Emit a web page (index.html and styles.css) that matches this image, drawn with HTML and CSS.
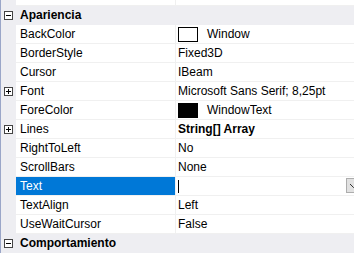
FILE: index.html
```html
<!DOCTYPE html>
<html>
  <head>
    <title>Properties</title>
    <meta charset="UTF-8">
    <link rel="stylesheet" href="styles.css">
  </head>
  <body>
    <div class="grid">
      <div class="row first">
        <div class="gutter"></div>
        <div class="name">AccessibleRole</div>
        <div class="value">Default</div>
      </div>
      <div class="category">
        <div class="gutter"><svg width="9" height="9" viewBox="0 0 9 9"><rect x="0.5" y="0.5" width="8" height="8" fill="#fff" stroke="#444"/><path d="M2 4.5 H7" stroke="#000"/></svg></div>
        <div class="cat-name">Apariencia</div>
      </div>
      <div class="row">
        <div class="gutter"></div>
        <div class="name">BackColor</div>
        <div class="value"><span class="swatch"></span>Window</div>
      </div>
      <div class="row">
        <div class="gutter"></div>
        <div class="name">BorderStyle</div>
        <div class="value">Fixed3D</div>
      </div>
      <div class="row">
        <div class="gutter"></div>
        <div class="name">Cursor</div>
        <div class="value">IBeam</div>
      </div>
      <div class="row">
        <div class="gutter"><svg width="9" height="9" viewBox="0 0 9 9"><rect x="0.5" y="0.5" width="8" height="8" fill="#fff" stroke="#444"/><path d="M2 4.5 H7 M4.5 2 V7" stroke="#000"/></svg></div>
        <div class="name">Font</div>
        <div class="value">Microsoft Sans Serif; 8,25pt</div>
      </div>
      <div class="row">
        <div class="gutter"></div>
        <div class="name">ForeColor</div>
        <div class="value"><span class="swatch dark"></span>WindowText</div>
      </div>
      <div class="row">
        <div class="gutter"><svg width="9" height="9" viewBox="0 0 9 9"><rect x="0.5" y="0.5" width="8" height="8" fill="#fff" stroke="#444"/><path d="M2 4.5 H7 M4.5 2 V7" stroke="#000"/></svg></div>
        <div class="name">Lines</div>
        <div class="value bold">String[] Array</div>
      </div>
      <div class="row">
        <div class="gutter"></div>
        <div class="name">RightToLeft</div>
        <div class="value">No</div>
      </div>
      <div class="row">
        <div class="gutter"></div>
        <div class="name">ScrollBars</div>
        <div class="value">None</div>
      </div>
      <div class="row selected">
        <div class="gutter"></div>
        <div class="name">Text</div>
        <div class="value"><span class="caret"></span><span class="drop"><svg width="9" height="6" viewBox="0 0 9 6"><path d="M1 1 L4.5 4.5 L8 1" fill="none" stroke="#333" stroke-width="1"/></svg></span></div>
      </div>
      <div class="row">
        <div class="gutter"></div>
        <div class="name">TextAlign</div>
        <div class="value">Left</div>
      </div>
      <div class="row">
        <div class="gutter"></div>
        <div class="name">UseWaitCursor</div>
        <div class="value">False</div>
      </div>
      <div class="category">
        <div class="gutter"><svg width="9" height="9" viewBox="0 0 9 9"><rect x="0.5" y="0.5" width="8" height="8" fill="#fff" stroke="#444"/><path d="M2 4.5 H7" stroke="#000"/></svg></div>
        <div class="cat-name">Comportamiento</div>
      </div>
    </div>
  </body>
</html>
```

FILE: styles.css
```css
body {
  margin: 0;
  padding: 0;
  overflow: hidden;
  background: #fff;
  font-family: "Liberation Sans", Arial, sans-serif;
  font-size: 12px;
  color: #000;
}
.grid {
  border-left: 1px solid #9aa6c8;
}
.row, .category {
  display: flex;
  height: 19px;
}
.row.first {
  margin-top: -13px;
}
.gutter {
  width: 15px;
  flex: none;
  background: #eeeef2;
  display: flex;
  align-items: center;
  justify-content: center;
}
.name {
  width: 155px;
  flex: none;
  padding-left: 4px;
  border-right: 1px solid #f0f0f0;
  border-bottom: 1px solid #f0f0f0;
  line-height: 18px;
  white-space: nowrap;
}
.value {
  flex: 1;
  padding-left: 2px;
  border-bottom: 1px solid #f0f0f0;
  line-height: 18px;
  display: flex;
  align-items: center;
  white-space: nowrap;
  position: relative;
}
.value.bold {
  font-weight: bold;
}
.category {
  background: #eeeef2;
}
.cat-name {
  padding-left: 4px;
  font-weight: bold;
  line-height: 19px;
}
.swatch {
  width: 18px;
  height: 13px;
  border: 1px solid #000;
  background: #fff;
  margin-right: 9px;
}
.swatch.dark {
  background: #000;
}
.selected .name {
  background: #0078d7;
  color: #fff;
}
.caret {
  width: 1px;
  height: 13px;
  background: #000;
}
.drop {
  position: absolute;
  right: -8px;
  top: 1px;
  width: 16px;
  height: 15px;
  background: #e1e1e1;
  border: 1px solid #adadad;
  box-sizing: border-box;
  display: flex;
  align-items: center;
  padding-left: 2px;
}
```
